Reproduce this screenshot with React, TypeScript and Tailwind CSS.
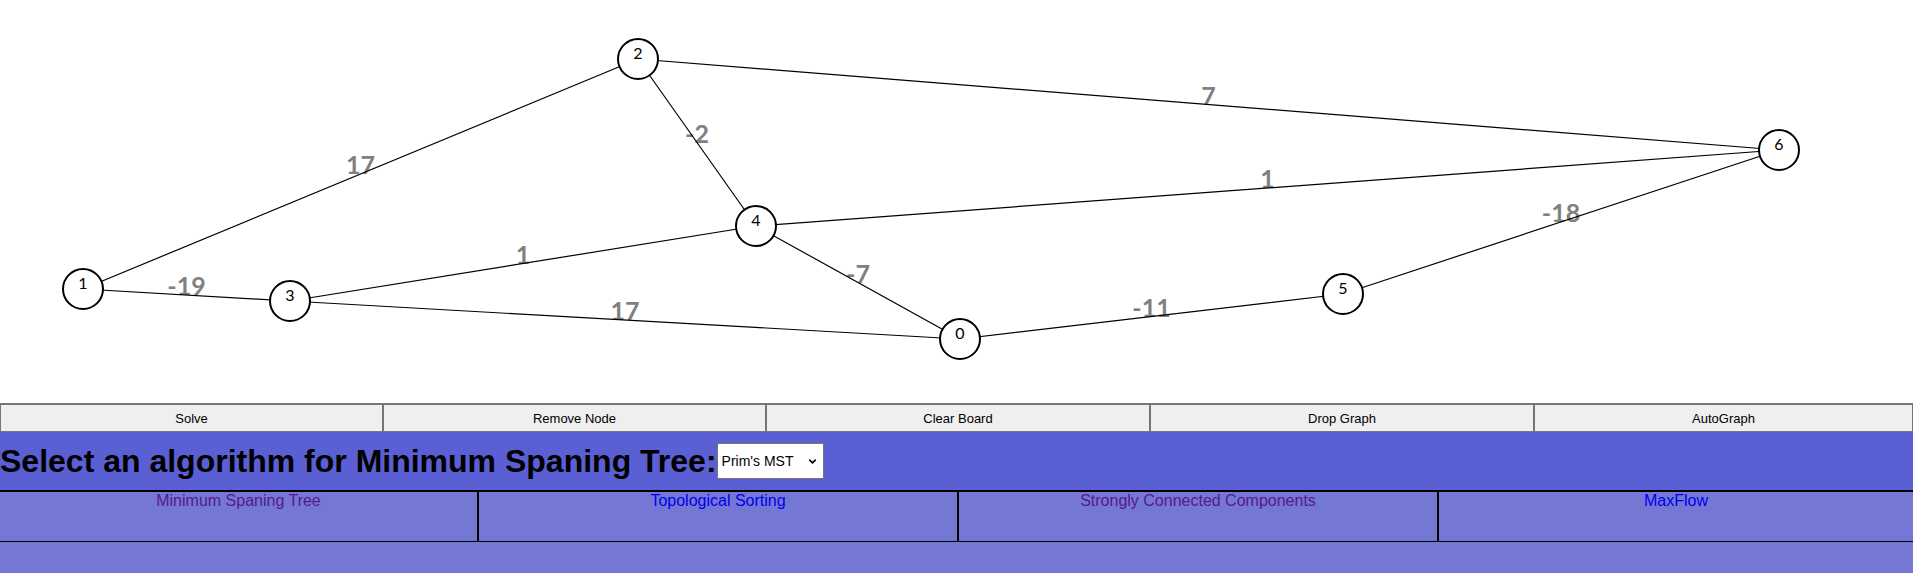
import React from 'react';
import { ChevronDown } from 'lucide-react';

const nodes: { id: number; x: number; y: number }[] = [
  { id: 0, x: 960, y: 339 },
  { id: 1, x: 83, y: 289 },
  { id: 2, x: 638, y: 59 },
  { id: 3, x: 290, y: 301 },
  { id: 4, x: 756, y: 226 },
  { id: 5, x: 1343, y: 294 },
  { id: 6, x: 1779, y: 150 },
];

const edges: [number, number, number][] = [
  [1, 2, 17],
  [1, 3, -19],
  [2, 4, -2],
  [2, 6, 7],
  [3, 4, 1],
  [3, 0, 17],
  [4, 6, 1],
  [4, 0, -7],
  [0, 5, -11],
  [5, 6, -18],
];

const buttons = ['Solve', 'Remove Node', 'Clear Board', 'Drop Graph', 'AutoGraph'];

const links = [
  { label: 'Minimum Spaning Tree', visited: true },
  { label: 'Topological Sorting', visited: false },
  { label: 'Strongly Connected Components', visited: true },
  { label: 'MaxFlow', visited: false },
];

const pos = (id: number) => nodes.find((n) => n.id === id)!;

const Board: React.FC = () => (
  <svg width={1913} height={403} className="block bg-white shrink-0">
    {/* weights */}
    {edges.map(([a, b, w]) => {
      const p = pos(a);
      const q = pos(b);
      return (
        <text
          key={`w${a}-${b}`}
          x={(p.x + q.x) / 2}
          y={(p.y + q.y) / 2}
          textAnchor="middle"
          fill="#808080"
          fontFamily="Lato, sans-serif"
          fontWeight={700}
          fontSize={25}
        >
          {w}
        </text>
      );
    })}
    {edges.map(([a, b]) => {
      const p = pos(a);
      const q = pos(b);
      return <line key={`e${a}-${b}`} x1={p.x} y1={p.y} x2={q.x} y2={q.y} stroke="#000" strokeWidth={1.2} />;
    })}
    {nodes.map((n) => (
      <g key={n.id}>
        <circle cx={n.x} cy={n.y} r={20} fill="#fff" stroke="#000" strokeWidth={2} />
        <text x={n.x} y={n.y} textAnchor="middle" fontFamily="Lato, sans-serif" fontSize={16} fill="#000">
          {n.id}
        </text>
      </g>
    ))}
  </svg>
);

const App: React.FC = () => {
  return (
    <div className="w-[1913px] h-[573px] flex flex-col bg-[#7477d4] overflow-hidden font-['Liberation_Sans',Arial,sans-serif]">
      <Board />

      {/* toolbar */}
      <div className="grid grid-cols-[383px_383px_384px_384px_1fr] h-[29px] shrink-0">
        {buttons.map((b) => (
          <button
            key={b}
            className="bg-[#efefef] border border-t-2 border-[#767676] text-[13px] text-black leading-none"
          >
            {b}
          </button>
        ))}
      </div>

      {/* algorithm picker */}
      <div className="flex items-center h-[58px] bg-[#5a5fd4] shrink-0">
        <h1 className="text-[32px] font-bold text-black leading-none">
          Select an algorithm for Minimum Spaning Tree:
        </h1>
        <div className="relative">
          <select
            defaultValue="prim"
            className="appearance-none w-[107px] h-[36px] bg-white border border-[#767676] pl-[4px] text-[14px] text-black outline-none"
          >
            <option value="prim">Prim's MST</option>
            <option value="kruskal">Kruskal's MST</option>
          </select>
          <ChevronDown className="absolute right-[6px] top-[13px] w-[11px] h-[11px] text-black pointer-events-none" strokeWidth={3.5} />
        </div>
      </div>

      {/* nav */}
      <div className="grid grid-cols-[479px_480px_480px_1fr] h-[52px] border-t-2 border-b border-black shrink-0">
        {links.map((l, i) => (
          <div key={l.label} className={`text-center text-[16px] leading-[18px] ${i < 3 ? 'border-r-2 border-black' : ''}`}>
            <a href="#" className={l.visited ? 'text-[#551a8b]' : 'text-[#0000ee]'}>
              {l.label}
            </a>
          </div>
        ))}
      </div>
    </div>
  );
};

export default App;
